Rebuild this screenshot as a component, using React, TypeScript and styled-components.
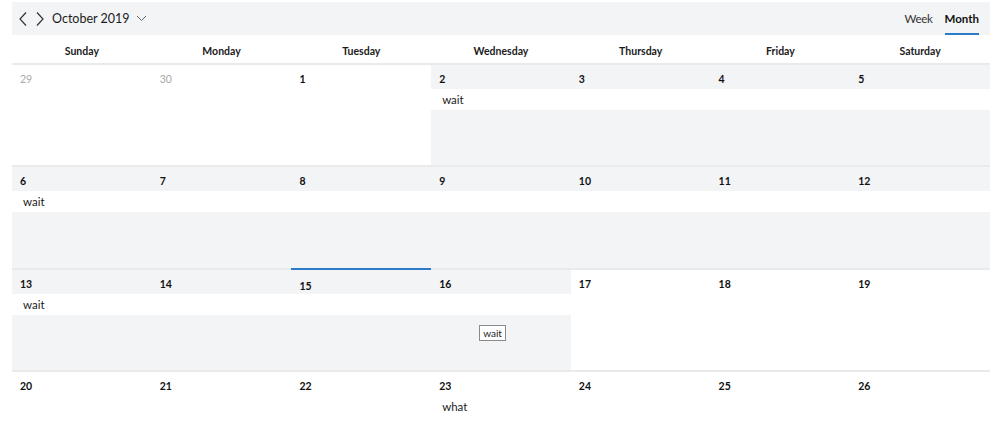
import React from "react";
import styled, { createGlobalStyle } from "styled-components";

const Global = createGlobalStyle`
  html, body { margin: 0; padding: 0; background: #fff; }
  body { font-family: "Lato", "Liberation Sans", sans-serif; color: #1b1b1b; }
`;

const Page = styled.div`
  padding: 2px 8px 0 12px;
  width: 978px;
`;

const Toolbar = styled.div`
  height: 33px;
  background: #f3f4f6;
  display: flex;
  align-items: center;
  justify-content: space-between;
  padding: 0 11px 0 2px;
`;

const NavGroup = styled.div`
  display: flex;
  align-items: center;
`;

const IconButton = styled.button`
  border: 0;
  background: transparent;
  padding: 0;
  width: 17px;
  height: 20px;
  display: flex;
  align-items: center;
  justify-content: center;
  cursor: pointer;
`;

const MonthLabel = styled.div`
  display: flex;
  align-items: center;
  gap: 6px;
  margin-left: 4px;
  font-size: 12.5px;
  color: #1b1b1b;
`;

const ViewTabs = styled.div`
  display: flex;
  align-items: stretch;
  height: 33px;
  gap: 12px;
`;

const Tab = styled.div<{ $active?: boolean }>`
  display: flex;
  align-items: center;
  font-size: 11.5px;
  letter-spacing: ${(p) => (p.$active ? "0" : "-0.3px")};
  font-weight: ${(p) => (p.$active ? 700 : 400)};
  color: ${(p) => (p.$active ? "#111" : "#333")};
  border-bottom: 2px solid ${(p) => (p.$active ? "#2b7bc9" : "transparent")};
  box-sizing: border-box;
  padding-top: 2px;
`;

const DayNames = styled.div`
  display: grid;
  grid-template-columns: repeat(7, 1fr);
  height: 28px;
  box-sizing: border-box;
  padding-top: 4px;
  align-items: center;
`;

const DayName = styled.div`
  text-align: center;
  font-size: 10.5px;
  font-weight: 700;
  color: #1b1b1b;
`;

const Week = styled.div`
  display: grid;
  grid-template-columns: repeat(7, 1fr);
  grid-template-rows: 24px 21px 1fr;
  height: 100.3px;
  border-top: 2px solid #e9eaec;
`;

const Cell = styled.div<{ $col: number; $shaded?: boolean; $today?: boolean }>`
  grid-column: ${(p) => p.$col};
  grid-row: 1 / 4;
  background: ${(p) => (p.$shaded ? "#f3f4f6" : "#fff")};
  box-shadow: ${(p) => (p.$today ? "inset 0 2px 0 #2b7bc9" : "none")};
  margin-top: ${(p) => (p.$today ? "-2px" : "0")};
`;

const DateNum = styled.div<{ $col: number; $muted?: boolean; $today?: boolean }>`
  grid-column: ${(p) => p.$col};
  grid-row: 1;
  z-index: 1;
  padding: ${(p) => (p.$today ? "10px" : "8px")} 0 0 8px;
  font-size: 10.5px;
  line-height: 13px;
  font-weight: ${(p) => (p.$muted ? 400 : 700)};
  color: ${(p) => (p.$muted ? "#a8a8a8" : "#111")};
`;

const EventBar = styled.div<{ $from: number; $to: number; $bg?: string }>`
  grid-column: ${(p) => p.$from} / ${(p) => p.$to};
  grid-row: 2;
  z-index: 1;
  background: ${(p) => p.$bg ?? "#fff"};
  font-size: 11.5px;
  line-height: 21px;
  padding-left: 11px;
  color: #1b1b1b;
`;

const DragChip = styled.div<{ $col: number }>`
  grid-column: ${(p) => p.$col};
  grid-row: 3;
  z-index: 1;
  justify-self: start;
  align-self: start;
  margin: 10px 0 0 48px;
  border: 1px solid #8a8a8a;
  background: #fff;
  font-size: 10px;
  line-height: 14px;
  padding: 0 3px;
  color: #1b1b1b;
`;

const Chevron = ({ dir }: { dir: "left" | "right" }) => (
  <svg width="10" height="16" viewBox="0 0 10 16" fill="none">
    <path
      d={dir === "left" ? "M8 1.5 L2 8 L8 14.5" : "M2 1.5 L8 8 L2 14.5"}
      stroke="#333"
      strokeWidth="1.2"
    />
  </svg>
);

const Caret = () => (
  <svg width="11" height="7" viewBox="0 0 11 7" fill="none">
    <path d="M1 1 L5.5 5.5 L10 1" stroke="#666" strokeWidth="1" />
  </svg>
);

type CellData = {
  d: number;
  muted?: boolean;
  shaded?: boolean;
  today?: boolean;
};

type WeekData = {
  cells: CellData[];
  event?: { from: number; to: number; label: string; bg?: string };
  chip?: { col: number; label: string };
};

const weeks: WeekData[] = [
  {
    cells: [
      { d: 29, muted: true },
      { d: 30, muted: true },
      { d: 1 },
      { d: 2, shaded: true },
      { d: 3, shaded: true },
      { d: 4, shaded: true },
      { d: 5, shaded: true },
    ],
    event: { from: 4, to: 8, label: "wait" },
  },
  {
    cells: [6, 7, 8, 9, 10, 11, 12].map((d) => ({ d, shaded: true })),
    event: { from: 1, to: 8, label: "wait" },
  },
  {
    cells: [
      { d: 13, shaded: true },
      { d: 14, shaded: true },
      { d: 15, shaded: true, today: true },
      { d: 16, shaded: true },
      { d: 17 },
      { d: 18 },
      { d: 19 },
    ],
    event: { from: 1, to: 5, label: "wait" },
    chip: { col: 4, label: "wait" },
  },
  {
    cells: [20, 21, 22, 23, 24, 25, 26].map((d) => ({ d })),
    event: { from: 4, to: 5, label: "what" },
  },
];

const dayNames = ["Sunday", "Monday", "Tuesday", "Wednesday", "Thursday", "Friday", "Saturday"];

export default function App() {
  return (
    <Page>
      <Global />
      <Toolbar>
        <NavGroup>
          <IconButton aria-label="previous">
            <Chevron dir="left" />
          </IconButton>
          <IconButton aria-label="next">
            <Chevron dir="right" />
          </IconButton>
          <MonthLabel>
            October 2019 <Caret />
          </MonthLabel>
        </NavGroup>
        <ViewTabs>
          <Tab>Week</Tab>
          <Tab $active>Month</Tab>
        </ViewTabs>
      </Toolbar>
      <DayNames>
        {dayNames.map((n) => (
          <DayName key={n}>{n}</DayName>
        ))}
      </DayNames>
      {weeks.map((w, wi) => (
        <Week key={wi}>
          {w.cells.map((c, i) => (
            <Cell key={"c" + i} $col={i + 1} $shaded={c.shaded} $today={c.today} />
          ))}
          {w.cells.map((c, i) => (
            <DateNum key={"d" + i} $col={i + 1} $muted={c.muted} $today={c.today}>
              {c.d}
            </DateNum>
          ))}
          {w.event && (
            <EventBar $from={w.event.from} $to={w.event.to}>
              {w.event.label}
            </EventBar>
          )}
          {w.chip && <DragChip $col={w.chip.col}>{w.chip.label}</DragChip>}
        </Week>
      ))}
    </Page>
  );
}
